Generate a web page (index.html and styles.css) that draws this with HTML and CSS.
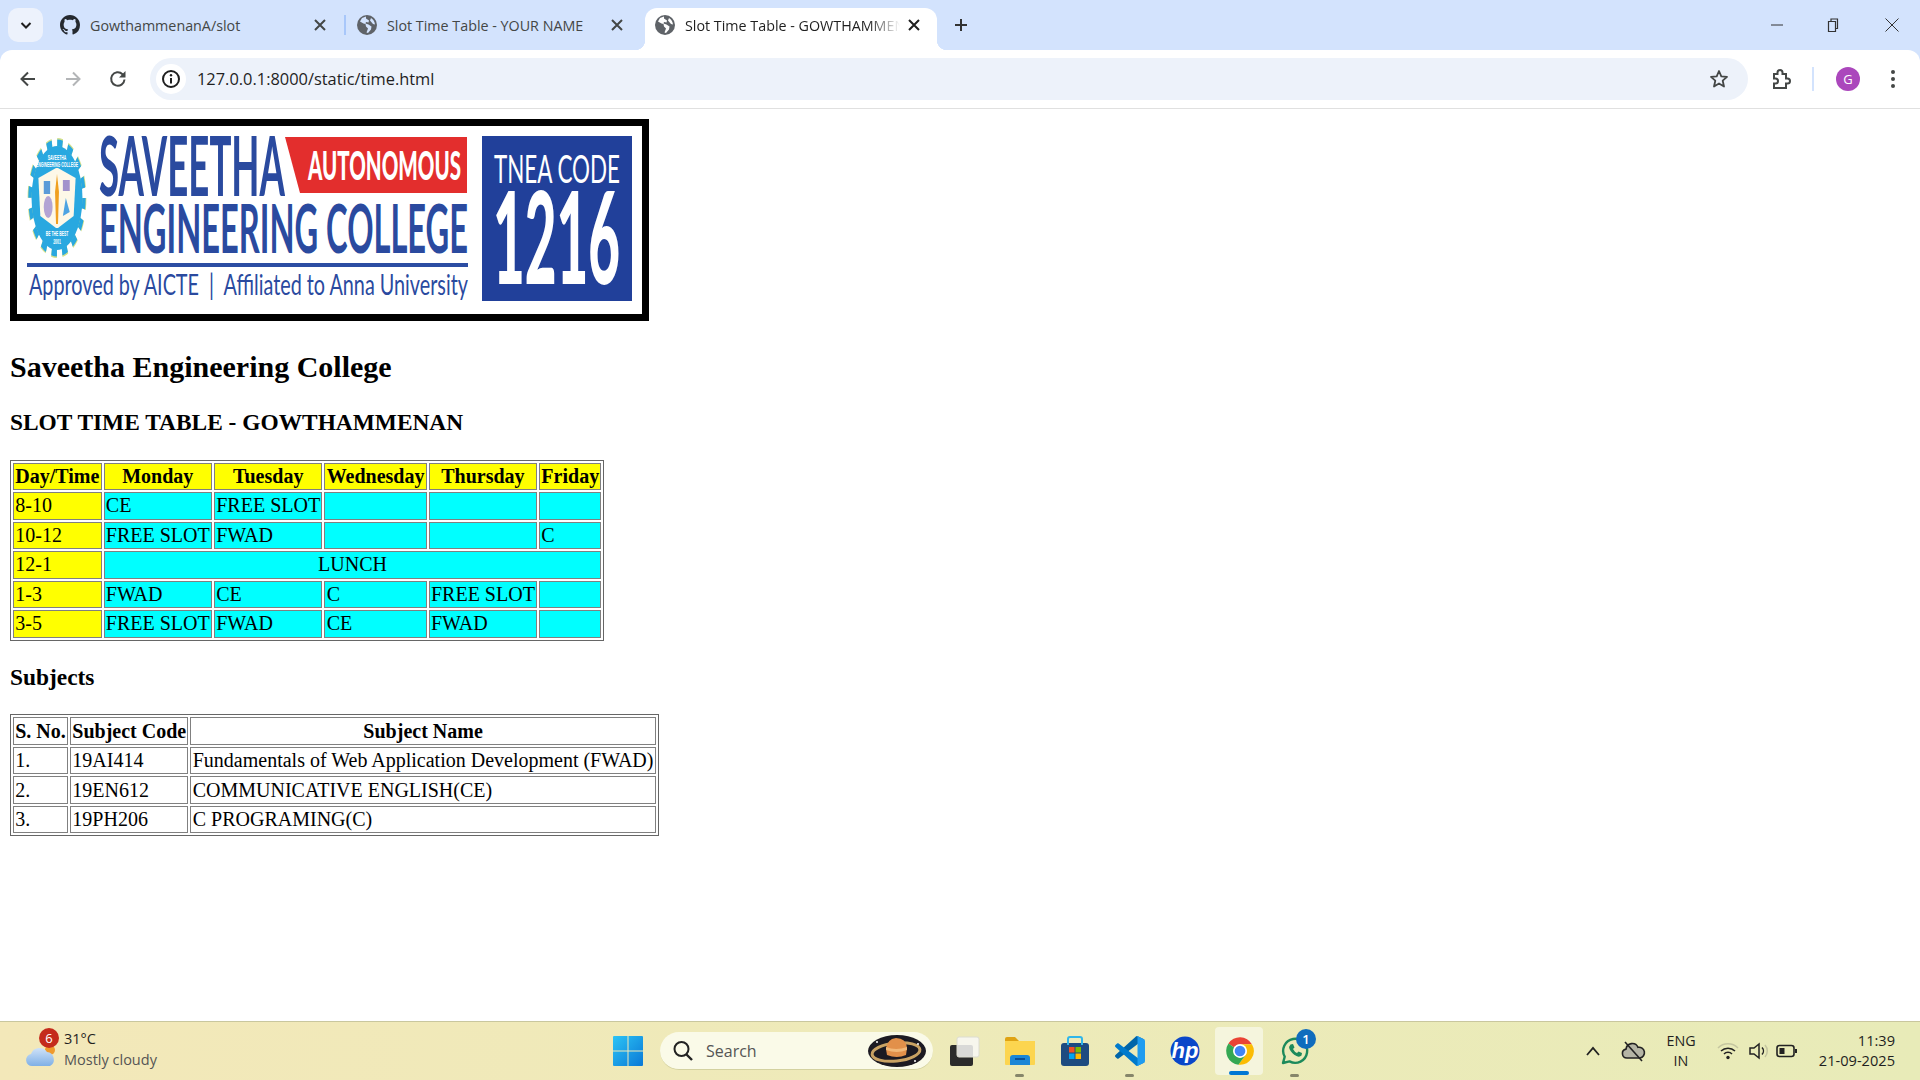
FILE: index.html
```html
<!DOCTYPE html>
<html lang="en">

<head>
    <title>Slot Time Table - GOWTHAMMENAN</title>
    <meta charset="utf-8">
    <link rel="stylesheet" href="styles.css">
</head>

<body>
    <div id="window">
        <div id="tabstrip">
            <div class="tab-search">
                <svg width="16" height="16" viewBox="0 0 16 16"><path d="M3.500 6l4.500 4.500L12.500 6" fill="none" stroke="#1f1f1f" stroke-width="2"/></svg>
            </div>
            <div class="tab">
                <svg class="favicon" viewBox="0 0 16 16"><path fill="#24292f" d="M8 0C3.58 0 0 3.58 0 8c0 3.54 2.29 6.53 5.47 7.59.4.07.55-.17.55-.38 0-.19-.01-.82-.01-1.49-2.01.37-2.53-.49-2.69-.94-.09-.23-.48-.94-.82-1.13-.28-.15-.68-.52-.01-.53.63-.01 1.08.58 1.23.82.72 1.21 1.87.87 2.33.66.07-.52.28-.87.51-1.07-1.78-.2-3.64-.89-3.64-3.95 0-.87.31-1.59.82-2.15-.08-.2-.36-1.02.08-2.12 0 0 .67-.21 2.2.82.64-.18 1.32-.27 2-.27.68 0 1.36.09 2 .27 1.53-1.04 2.2-.82 2.2-.82.44 1.1.16 1.92.08 2.12.51.56.82 1.27.82 2.15 0 3.07-1.87 3.75-3.65 3.95.29.25.54.73.54 1.48 0 1.07-.01 1.93-.01 2.2 0 .21.15.46.55.38A8.013 8.013 0 0016 8c0-4.42-3.58-8-8-8z"/></svg>
                <span class="tab-title">GowthammenanA/slot</span>
                <svg class="tab-close" viewBox="0 0 16 16"><path d="M3 3l10 10M13 3L3 13" stroke="#444746" stroke-width="2"/></svg>
                <span class="tab-sep"></span>
            </div>
            <div class="tab">
                <svg class="favicon" viewBox="0 0 20 20"><circle cx="10" cy="10" r="10" fill="#5f6368"/><path fill="#d3e3fd" d="M9 1.500L5 3 3 6.500l3.500 2 2 .5.500 2.500 2 2-1.500 4 1.500.5 3-3.500.5-3-3-2-3-1 .5-1.500 2.500.5.5-2L9 3.500zM14 3l-1 2.500 3 3.500 2 .5Q17.500 5 14 3z"/></svg>
                <span class="tab-title">Slot Time Table - YOUR NAME</span>
                <svg class="tab-close" viewBox="0 0 16 16"><path d="M3 3l10 10M13 3L3 13" stroke="#444746" stroke-width="2"/></svg>
            </div>
            <div class="tab tab-active">
                <svg class="favicon" viewBox="0 0 20 20"><circle cx="10" cy="10" r="10" fill="#5f6368"/><path fill="#fff" d="M9 1.500L5 3 3 6.500l3.500 2 2 .5.500 2.500 2 2-1.500 4 1.500.5 3-3.500.5-3-3-2-3-1 .5-1.500 2.500.5.5-2L9 3.500zM14 3l-1 2.500 3 3.500 2 .5Q17.500 5 14 3z"/></svg>
                <span class="tab-title">Slot Time Table - GOWTHAMMENAN</span>
                <svg class="tab-close" viewBox="0 0 16 16"><path d="M3 3l10 10M13 3L3 13" stroke="#1f1f1f" stroke-width="2"/></svg>
            </div>
            <svg class="new-tab" viewBox="0 0 16 16"><path d="M8 2v12M2 8h12" stroke="#333" stroke-width="2"/></svg>
            <div class="window-controls">
                <svg viewBox="0 0 16 16"><path d="M2 8h12" stroke="#333" stroke-width="1"/></svg>
                <svg viewBox="0 0 16 16"><path d="M3.500 4.500h7v10h-7zM6 4.500V2h6.500v9.500h-2" fill="none" stroke="#333" stroke-width="1.200"/></svg>
                <svg viewBox="0 0 16 16"><path d="M1.500 1.500l13 13M14.500 1.500l-13 13" stroke="#333" stroke-width="1"/></svg>
            </div>
        </div>

        <div id="toolbar">
            <svg class="nav-icon" viewBox="0 0 20 20"><path d="M17 10H4M10 3.500L3.500 10l6.500 6.500" fill="none" stroke="#444746" stroke-width="2"/></svg>
            <svg class="nav-icon" viewBox="0 0 20 20"><path d="M3 10h13M10 3.500l6.500 6.500-6.500 6.500" fill="none" stroke="#b3b5b7" stroke-width="2"/></svg>
            <svg class="nav-icon" viewBox="0 0 20 20"><path d="M16.500 10.500a6.700 6.700 0 1 1-2-5.300L16.500 7" fill="none" stroke="#444746" stroke-width="2"/><path d="M17.500 2v6.500H11z" fill="#444746"/></svg>
            <div class="omnibox">
                <span class="site-info">
                    <svg width="20" height="20" viewBox="0 0 20 20"><circle cx="10" cy="10" r="8" fill="none" stroke="#1f1f1f" stroke-width="2"/><path d="M10 9v5.500" stroke="#1f1f1f" stroke-width="2"/><circle cx="10" cy="6.300" r="1.200" fill="#1f1f1f"/></svg>
                </span>
                <span class="url">127.0.0.1:8000/static/time.html</span>
                <svg class="star" viewBox="0 0 20 20"><path d="M10 2l2.300 5.400 5.700.5-4.300 3.800 1.300 5.800L10 14.500l-5 3 1.300-5.800L2 7.900l5.700-.5z" fill="none" stroke="#444746" stroke-width="1.800" stroke-linejoin="round"/></svg>
            </div>
            <svg class="extensions" viewBox="0 0 24 24"><path d="M6 7h3.500V5.500a2.500 2.500 0 0 1 5 0V7H18v4.500h1.500a2.500 2.500 0 0 1 0 5H18V21H6v-4.500h1.500a2.500 2.500 0 0 0 0-5H6z" fill="none" stroke="#444746" stroke-width="2"/></svg>
            <span class="toolbar-sep"></span>
            <span class="avatar">G</span>
            <svg class="menu" viewBox="0 0 6 20"><circle cx="3" cy="3" r="2" fill="#444746"/><circle cx="3" cy="10" r="2" fill="#444746"/><circle cx="3" cy="17" r="2" fill="#444746"/></svg>
        </div>

        <div id="page">
            <svg class="college-logo" viewBox="0 0 625 188">
                <rect width="625" height="188" fill="#fff"/>
                <g transform="translate(40 72) scale(0.49 1)">
                    <circle r="55" fill="none" stroke="#d3e08a" stroke-width="10" stroke-dasharray="11 10.600"/>
                    <circle r="55" fill="none" stroke="#29a8e0" stroke-width="7" stroke-dasharray="11 10.600"/>
                    <circle r="52" fill="#29a8e0"/>
                    <path d="M-38 -20 L-2 -30 L2 -30 L38 -20 L34 18 L2 30 L-2 30 L-34 18Z" fill="#fdf8e8"/>
                    <path d="M0 -24 L4 -6 L2 26 L-2 26 L-4 -6Z" fill="#f0a020"/>
                    <rect x="-27" y="-17" width="13" height="13" fill="#5b9bd8"/>
                    <rect x="12" y="-18" width="14" height="11" fill="#a292cc"/>
                    <ellipse cx="-18" cy="9" rx="9" ry="11" fill="#b3a4d4"/>
                    <path d="M18 0l8 14-14 4z" fill="#4da3e2"/>
                    <text class="emblem-text" y="-38" text-anchor="middle">SAVEETHA</text>
                    <text class="emblem-text" y="-31" text-anchor="middle" textLength="86" lengthAdjust="spacingAndGlyphs">ENGINEERING COLLEGE</text>
                    <text class="emblem-text" y="38" text-anchor="middle">BE THE BEST</text>
                    <text class="emblem-text" y="46" text-anchor="middle">2001</text>
                </g>
                <text class="logo-title logo-heavy" x="82" y="70" font-size="82" textLength="186" lengthAdjust="spacingAndGlyphs">SAVEETHA</text>
                <polygon points="268,11 450,11 450,67 283,67" fill="#e32e2d"/>
                <text class="logo-badge" x="291" y="54" font-size="39" textLength="153" lengthAdjust="spacingAndGlyphs">AUTONOMOUS</text>
                <text class="logo-title logo-heavy" x="82" y="127" font-size="67" textLength="369" lengthAdjust="spacingAndGlyphs">ENGINEERING COLLEGE</text>
                <rect x="10" y="137" width="441" height="4" fill="#2c4da3"/>
                <text class="logo-title" x="12" y="169" font-size="28" textLength="439" lengthAdjust="spacingAndGlyphs">Approved by AICTE &#160;|&#160; Affiliated to Anna University</text>
                <rect x="465" y="10" width="150" height="165" fill="#21409a"/>
                <text class="logo-code" x="477" y="57" font-size="39" textLength="126" lengthAdjust="spacingAndGlyphs">TNEA CODE</text>
                <text class="logo-number" x="476" y="158" font-size="128" textLength="127" lengthAdjust="spacingAndGlyphs">1216</text>
            </svg>

            <h2>Saveetha Engineering College</h2>
            <h3>SLOT TIME TABLE - GOWTHAMMENAN</h3>

            <table class="slots">
                <tr>
                    <th>Day/Time</th>
                    <th>Monday</th>
                    <th>Tuesday</th>
                    <th>Wednesday</th>
                    <th>Thursday</th>
                    <th>Friday</th>
                </tr>
                <tr>
                    <td class="time">8-10</td>
                    <td>CE</td>
                    <td>FREE SLOT</td>
                    <td></td>
                    <td></td>
                    <td></td>
                </tr>
                <tr>
                    <td class="time">10-12</td>
                    <td>FREE SLOT</td>
                    <td>FWAD</td>
                    <td></td>
                    <td></td>
                    <td>C</td>
                </tr>
                <tr>
                    <td class="time">12-1</td>
                    <td class="lunch" colspan="5">LUNCH</td>
                </tr>
                <tr>
                    <td class="time">1-3</td>
                    <td>FWAD</td>
                    <td>CE</td>
                    <td>C</td>
                    <td>FREE SLOT</td>
                    <td></td>
                </tr>
                <tr>
                    <td class="time">3-5</td>
                    <td>FREE SLOT</td>
                    <td>FWAD</td>
                    <td>CE</td>
                    <td>FWAD</td>
                    <td></td>
                </tr>
            </table>

            <h3>Subjects</h3>

            <table class="subjects">
                <tr>
                    <th>S. No.</th>
                    <th>Subject Code</th>
                    <th>Subject Name</th>
                </tr>
                <tr>
                    <td>1.</td>
                    <td>19AI414</td>
                    <td>Fundamentals of Web Application Development (FWAD)</td>
                </tr>
                <tr>
                    <td>2.</td>
                    <td>19EN612</td>
                    <td>COMMUNICATIVE ENGLISH(CE)</td>
                </tr>
                <tr>
                    <td>3.</td>
                    <td>19PH206</td>
                    <td>C PROGRAMING(C)</td>
                </tr>
            </table>
        </div>

        <div id="taskbar">
            <div class="weather">
                <span class="weather-icon">
                    <svg width="32" height="24" viewBox="0 0 32 24">
                        <defs><linearGradient id="cloudFill" x1="0" y1="0" x2="0" y2="1"><stop offset="0" stop-color="#cfe2f8"/><stop offset="1" stop-color="#7fb0e6"/></linearGradient></defs>
                        <circle cx="25" cy="7" r="5" fill="#ef9a2d"/>
                        <path d="M7 23a6 6 0 0 1-1-11.900A9 9 0 0 1 22 9a7.500 7.500 0 0 1 3 14z" fill="url(#cloudFill)"/>
                    </svg>
                    <span class="weather-badge">6</span>
                </span>
                <div class="weather-text">
                    <span class="temp">31°C</span>
                    <span class="sky">Mostly cloudy</span>
                </div>
            </div>

            <svg class="start" viewBox="0 0 30 30">
                <defs><linearGradient id="winFill" x1="0" y1="0" x2="1" y2="1"><stop offset="0" stop-color="#2cc4f5"/><stop offset="1" stop-color="#0a78d6"/></linearGradient></defs>
                <path d="M1 0h13.500v14.500H0V1a1 1 0 0 1 1-1zM15.500 0H29a1 1 0 0 1 1 1v13.500H15.500zM0 15.500h14.500V30H1a1 1 0 0 1-1-1zM15.500 15.500H30V29a1 1 0 0 1-1 1H15.500z" fill="url(#winFill)"/>
            </svg>

            <div class="search-box">
                <svg width="24" height="24" viewBox="0 0 24 24"><circle cx="10.500" cy="10" r="7" fill="none" stroke="#222" stroke-width="2"/><path d="M15.500 15.500l5.500 5.500" stroke="#222" stroke-width="2.400"/></svg>
                <span class="search-label">Search</span>
                <svg class="saturn" viewBox="0 0 58 32">
                    <ellipse cx="29" cy="16" rx="29" ry="16" fill="#1c1a22"/>
                    <ellipse cx="28" cy="17" rx="24" ry="9" fill="none" stroke="#c9a263" stroke-width="3" transform="rotate(-6 28 17)"/>
                    <path d="M18 14q1-10 10-11 10 0 11 10l-1 7q-9 4-19 0z" fill="#e2904a"/>
                    <path d="M18 12q10 4 21 0v3q-10 4-21 0z" fill="#f2b878"/>
                    <circle cx="9" cy="7" r="1" fill="#fff"/><circle cx="47" cy="26" r="1" fill="#fff"/><circle cx="50" cy="9" r="1" fill="#fff"/>
                </svg>
            </div>

            <div class="apps">
                <div class="app">
                    <svg viewBox="0 0 30 30"><rect x="0" y="9" width="23" height="21" rx="2" fill="#2b2b2b"/><rect x="7" y="1" width="22" height="20" rx="2" fill="#f8f8f6" fill-opacity=".85" stroke="#dcdcd0"/></svg>
                </div>
                <div class="app app-open">
                    <svg viewBox="0 0 30 30"><path d="M0 3a2 2 0 0 1 2-2h8l4 4H0z" fill="#dfa313"/><path d="M0 5h30v23a1 1 0 0 1-1 1H1a1 1 0 0 1-1-1z" fill="#fcd54f"/><path d="M5 29v-7a3 3 0 0 1 3-3h14a3 3 0 0 1 3 3v7z" fill="#1b86d6"/><rect x="10" y="22" width="10" height="2" fill="#0b4f95"/></svg>
                </div>
                <div class="app">
                    <svg viewBox="0 0 30 30"><rect x="1" y="7" width="28" height="23" rx="3" fill="#1d4b80"/><path d="M8 9V3a2 2 0 0 1 2-2h10a2 2 0 0 1 2 2v6" fill="none" stroke="#2fb6ea" stroke-width="2"/><rect x="9" y="11" width="5.500" height="5.500" fill="#f25022"/><rect x="15.500" y="11" width="5.500" height="5.500" fill="#7fba00"/><rect x="9" y="17.500" width="5.500" height="5.500" fill="#00a4ef"/><rect x="15.500" y="17.500" width="5.500" height="5.500" fill="#ffb900"/></svg>
                </div>
                <div class="app app-open">
                    <svg viewBox="0 0 100 100"><path fill="#0065a9" d="M96.500 10.800 75.900.9c-2.400-1.200-5.200-.7-7.100 1.200L1.400 63.600c-1.800 1.700-1.800 4.500 0 6.200l5.500 5c1.500 1.300 3.700 1.400 5.300.2L93.400 13.600c2.700-2 6.600-.1 6.600 3.200v-.2c0-2.400-1.300-4.600-3.500-5.800z"/><path fill="#007acc" d="M96.500 89.200 75.900 99.100c-2.400 1.200-5.200.7-7.100-1.200L1.400 36.400c-1.800-1.700-1.800-4.500 0-6.200l5.500-5c1.500-1.300 3.700-1.400 5.300-.2l81.200 61.600c2.700 2 6.600.1 6.600-3.200v.2c0 2.400-1.300 4.600-3.500 5.800z"/><path fill="#1f9cf0" d="M75.900 99.100c-2.400 1.200-5.200.6-7.100-1.300 2.300 2.300 6.200.7 6.200-2.600V4.800c0-3.300-3.900-4.900-6.200-2.600 1.900-1.900 4.700-2.500 7.100-1.300l20.600 9.900c2.200 1 3.500 3.200 3.500 5.700v67c0 2.500-1.300 4.700-3.500 5.700z"/></svg>
                </div>
                <div class="app">
                    <svg viewBox="0 0 30 30"><circle cx="15" cy="15" r="14.500" fill="#0a47c9"/><text class="hp-text" x="15" y="21.500" text-anchor="middle">hp</text></svg>
                </div>
                <div class="app app-active">
                    <svg viewBox="0 0 48 48"><path fill="#ea4335" d="M5.500 12A22 22 0 0 1 43.050 13L24 13A11 11 0 0 0 14.500 18.500Z"/><path fill="#fbbc04" d="M43.050 13A22 22 0 0 1 21.500 45.900L33.500 29.500A11 11 0 0 0 24 13Z"/><path fill="#34a853" d="M5.500 12A22 22 0 0 0 21.500 45.900L33.500 29.500A11 11 0 0 1 14.500 18.500Z"/><circle cx="24" cy="24" r="11" fill="#fff"/><circle cx="24" cy="24" r="8.500" fill="#4285f4"/></svg>
                </div>
                <div class="app app-open">
                    <svg viewBox="0 0 30 30"><path d="M3 27l1.700-6.300A12 12 0 1 1 9.500 25.400z" fill="none" stroke="#1c8a5b" stroke-width="2.400" stroke-linejoin="round"/><path d="M10.500 8.500l2.500-.5 1.500 3.500-1.500 1.500q1.500 3 4 4l1.500-1.500 3.500 1.500-.5 2.500q-2 2-5 .5-5-2.500-7-7-1-2.500 1-4.500z" fill="#1c8a5b"/></svg>
                    <span class="app-badge">1</span>
                </div>
            </div>

            <div class="tray">
                <svg class="tray-chevron" viewBox="0 0 40 16"><path d="M14 12l6-7 6 7" fill="none" stroke="#222" stroke-width="1.800"/></svg>
                <svg class="tray-cloud" viewBox="0 0 40 24"><path d="M14 19a4.500 4.500 0 0 1-1-8.900 6.300 6.300 0 0 1 12-1.800 5 5 0 0 1 2 10.700z" fill="#b5b5a5" stroke="#222" stroke-width="1.600"/><path d="M12 3l17 19" stroke="#222" stroke-width="1.600"/></svg>
                <div class="lang">
                    <span>ENG</span>
                    <span>IN</span>
                </div>
                <svg class="tray-icon tray-wifi" viewBox="0 0 24 20"><path d="M2 7a14 14 0 0 1 20 0" fill="none" stroke="#c5c6a0" stroke-width="1.500"/><path d="M5 10a10 10 0 0 1 14 0M8 13a5.500 5.500 0 0 1 8 0" fill="none" stroke="#222" stroke-width="1.500"/><circle cx="12" cy="16.500" r="1.700" fill="#222"/></svg>
                <svg class="tray-icon tray-volume" viewBox="0 0 24 20"><path d="M2 7h4l5-4v14l-5-4H2z" fill="none" stroke="#222" stroke-width="1.500"/><path d="M14 6.500a5 5 0 0 1 0 7" fill="none" stroke="#222" stroke-width="1.500"/><path d="M17 4a9 9 0 0 1 0 12" fill="none" stroke="#c5c6a0" stroke-width="1.500"/></svg>
                <svg class="tray-icon tray-battery" viewBox="0 0 24 20"><rect x="2" y="4.500" width="17" height="11" rx="2.500" fill="none" stroke="#222" stroke-width="1.600"/><rect x="4.500" y="7" width="5" height="6" fill="#222"/><rect x="20" y="8" width="2" height="4" fill="#222"/></svg>
                <div class="clock">
                    <span>11:39</span>
                    <span>21-09-2025</span>
                </div>
            </div>
        </div>
    </div>
</body>

</html>
```

FILE: styles.css
```css
html,
body {
    margin: 0;
    height: 100%;
    overflow: hidden;
}

#window {
    display: flex;
    flex-direction: column;
    height: 1080px;
    background: #d3e3fd;
    font-family: "Open Sans", sans-serif;
}

/* tab strip */
#tabstrip {
    display: flex;
    align-items: flex-end;
    flex: 0 0 50px;
    box-sizing: border-box;
    padding-left: 8px;
}

.tab-search {
    display: flex;
    align-items: center;
    justify-content: center;
    width: 35px;
    height: 34px;
    margin: 0 8px 8px 0;
    border-radius: 10px;
    background: #edf2fc;
}

.tab {
    position: relative;
    display: flex;
    align-items: center;
    box-sizing: border-box;
    width: 297px;
    height: 42px;
    padding: 0 20px 8px 9px;
    font-size: 14.3px;
    color: #444746;
}

.favicon {
    flex: 0 0 20px;
    height: 20px;
}

.tab-title {
    flex: 1;
    min-width: 0;
    margin: 0 6px 0 10px;
    overflow: hidden;
    white-space: nowrap;
}

.tab-close {
    flex: 0 0 16px;
    height: 16px;
}

.tab-sep {
    position: absolute;
    left: 293px;
    top: 7px;
    width: 2px;
    height: 20px;
    background: #a8c7fa;
}

.tab-active {
    width: 292px;
    padding-left: 10px;
    padding-right: 15px;
    background: #fff;
    border-radius: 12px 12px 0 0;
    color: #1f1f1f;
}

.tab-active::before,
.tab-active::after {
    content: "";
    position: absolute;
    bottom: 0;
    width: 10px;
    height: 10px;
}

.tab-active::before {
    left: -10px;
    background: radial-gradient(circle at 0 0, #d3e3fd 10px, #fff 10.5px);
}

.tab-active::after {
    right: -10px;
    background: radial-gradient(circle at 100% 0, #d3e3fd 10px, #fff 10.5px);
}

.tab-active .tab-title {
    -webkit-mask-image: linear-gradient(to right, #000 85%, transparent 100%);
    mask-image: linear-gradient(to right, #000 85%, transparent 100%);
}

.new-tab {
    width: 16px;
    height: 16px;
    margin: 0 0 17px 16px;
}

.window-controls {
    display: flex;
    align-items: center;
    margin: 0 20px 17px auto;
    gap: 40px;
}

.window-controls svg {
    width: 16px;
    height: 16px;
}

.window-controls svg:nth-child(3) {
    margin-left: 3px;
}

/* toolbar */
#toolbar {
    display: flex;
    align-items: center;
    flex: 0 0 58.5px;
    box-sizing: border-box;
    padding-left: 18px;
    background: #fff;
    border-bottom: 1px solid #e0e0e0;
    border-radius: 12px 12px 0 0;
}

.nav-icon {
    width: 20px;
    height: 20px;
    margin-right: 25px;
}

.nav-icon + .omnibox {
    margin-left: -3px;
}

.omnibox {
    display: flex;
    align-items: center;
    box-sizing: border-box;
    width: 1598px;
    height: 42px;
    padding: 0 19px 0 6px;
    border-radius: 21px;
    background: #edf2fa;
}

.site-info {
    display: flex;
    align-items: center;
    justify-content: center;
    width: 30px;
    height: 30px;
    border-radius: 50%;
    background: #fff;
}

.url {
    flex: 1;
    margin-left: 11px;
    font-size: 16.4px;
    color: #1f1f1f;
}

.star {
    width: 20px;
    height: 20px;
}

.extensions {
    width: 24px;
    height: 24px;
    margin-left: 20px;
}

.toolbar-sep {
    width: 2px;
    height: 24px;
    margin: 0 22px 0 20px;
    background: #d3e3fd;
}

.avatar {
    width: 24px;
    height: 24px;
    border-radius: 50%;
    background: #ab47bc;
    color: #fff;
    font-size: 13px;
    line-height: 24px;
    text-align: center;
}

.menu {
    width: 6px;
    height: 20px;
    margin-left: 30px;
}

/* the page itself, browser is at 125% */
#page {
    flex: 1;
    zoom: 1.25;
    padding: 8px;
    min-height: 0;
    background: #fff;
    font-family: "Liberation Serif", serif;
    color: #000;
}

.college-logo {
    display: inline-block;
    width: 500px;
    height: 150.4px;
    border: 6px solid #000;
}

.logo-title {
    font-family: Lato, sans-serif;
    fill: #2a4a9f;
}

.logo-heavy {
    font-weight: 700;
}

.logo-badge {
    font-family: Lato, sans-serif;
    font-weight: 900;
    fill: #fff;
}

.logo-code {
    font-family: Lato, sans-serif;
    fill: #fff;
}

.logo-number {
    font-family: Lato, sans-serif;
    font-weight: 900;
    fill: #fff;
}

.emblem-text {
    font-family: "Liberation Sans", sans-serif;
    font-size: 7px;
    font-weight: 700;
    fill: #fff;
}

table {
    border: 1px solid #666;
    border-spacing: 2px;
}

th,
td {
    border: 1px solid #808080;
    padding: 1px;
}

.slots th {
    background: #ff0;
}

.slots td {
    background: #0ff;
}

.slots td.time {
    background: #ff0;
}

.slots td.lunch {
    text-align: center;
}

/* windows taskbar */
#taskbar {
    display: flex;
    align-items: center;
    flex: 0 0 59px;
    box-sizing: border-box;
    border-top: 1px solid #c9c79e;
    background: linear-gradient(to right, #f3e8b9, #eeeab9 45%, #e8ebb8);
    color: #1f1f1f;
}

.weather {
    display: flex;
    flex: 0 0 613px;
    box-sizing: border-box;
    padding: 0 0 4px 25px;
}

.weather-icon {
    position: relative;
    display: flex;
    align-items: flex-end;
    box-sizing: border-box;
    width: 39px;
    height: 42px;
    padding-bottom: 3px;
}

.weather-badge {
    position: absolute;
    left: 14px;
    top: 0;
    width: 20px;
    height: 20px;
    border-radius: 50%;
    background: #c42b1c;
    color: #fff;
    font-size: 13px;
    line-height: 20px;
    text-align: center;
}

.weather-text {
    display: flex;
    flex-direction: column;
    font-size: 14.5px;
    line-height: 21px;
}

.sky {
    color: #555;
}

.start {
    flex: 0 0 30px;
    height: 30px;
}

.search-box {
    display: flex;
    align-items: center;
    box-sizing: border-box;
    width: 273px;
    height: 38px;
    margin-left: 17px;
    padding: 0 7px 0 11px;
    border-radius: 19px;
    background: #fafae8;
    border-bottom: 1px solid #d3d1a0;
}

.search-label {
    flex: 1;
    margin-left: 11px;
    font-size: 16px;
    color: #555;
}

.saturn {
    width: 58px;
    height: 32px;
}

.apps {
    display: flex;
    margin-left: 4px;
}

.app {
    position: relative;
    display: flex;
    align-items: center;
    justify-content: center;
    width: 55px;
    height: 48px;
}

.app svg {
    width: 30px;
    height: 30px;
}

.app-open::after {
    content: "";
    position: absolute;
    left: 23px;
    bottom: -2px;
    width: 9px;
    height: 3px;
    border-radius: 2px;
    background: #86866a;
}

.app-active::before {
    content: "";
    position: absolute;
    left: 3px;
    top: 0;
    width: 48px;
    height: 48px;
    border-radius: 4px;
    background: #f5f5dd;
}

.app-active::after {
    content: "";
    position: absolute;
    left: 17px;
    bottom: 0;
    width: 20px;
    height: 4px;
    border-radius: 2px;
    background: #0078d4;
}

.app-active svg {
    position: relative;
}

.app-badge {
    position: absolute;
    left: 29px;
    top: 2px;
    width: 20px;
    height: 20px;
    border-radius: 50%;
    background: #0f6cbd;
    color: #fff;
    font-size: 13px;
    font-weight: 600;
    line-height: 20px;
    text-align: center;
}

.hp-text {
    font-family: "Liberation Sans", sans-serif;
    font-size: 22px;
    font-style: italic;
    font-weight: 700;
    fill: #fff;
}

.tray {
    display: flex;
    align-items: center;
    box-sizing: border-box;
    width: 347px;
    margin-left: auto;
    padding-right: 25px;
}

.tray-chevron {
    width: 40px;
    height: 16px;
}

.tray-cloud {
    width: 40px;
    height: 24px;
}

.lang {
    display: flex;
    flex-direction: column;
    align-items: center;
    width: 56px;
    font-size: 14.3px;
    line-height: 20px;
}

.tray-icon {
    width: 24px;
    height: 20px;
}

.tray-wifi {
    margin-left: 7px;
}

.tray-volume {
    margin-left: 8px;
}

.tray-battery {
    margin-left: 3px;
}

.clock {
    display: flex;
    flex-direction: column;
    align-items: flex-end;
    margin: 0 0 2px auto;
    font-size: 14.6px;
    line-height: 20px;
}
```
